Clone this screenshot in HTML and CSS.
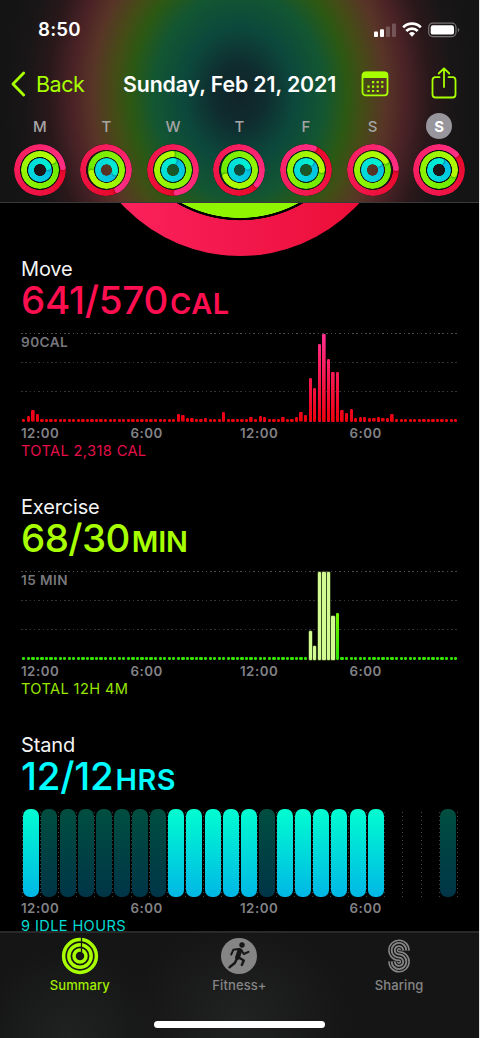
FILE: index.html
```html
<!DOCTYPE html>
<html lang="en">
<head>
<meta charset="utf-8">
<title>Activity</title>
<link rel="stylesheet" href="styles.css">
</head>
<body>
<div class="phone">
  <header class="header">
    <div class="status">
      <span class="time">8:50</span>
      <svg class="status-icons" width="88" height="18" viewBox="0 0 88 18">
        <g fill="#fff"><rect x="1" y="10.5" width="4" height="5.5" rx="1"/><rect x="7" y="8.3" width="4" height="7.7" rx="1"/></g>
        <g fill="#fff" opacity=".22"><rect x="13" y="5.5" width="4" height="10.5" rx="1"/><rect x="19" y="2.5" width="4" height="13.5" rx="1"/></g>
        <g fill="none" stroke="#fff" stroke-width="2.7"><path d="M30.2 6.4a12.3 12.3 0 0 1 17.6 0"/><path d="M33.3 10a8 8 0 0 1 11.4 0"/></g>
        <path fill="#fff" d="M36 12.5a4.4 4.4 0 0 1 6 0L39 15.8z"/>
        <rect x="55.7" y="2.2" width="27.3" height="13.4" rx="4" fill="none" stroke="#fff" stroke-opacity=".4" stroke-width="1.2"/>
        <rect x="57.7" y="4.2" width="23.3" height="9.4" rx="2.2" fill="#fff"/>
        <path d="M84.8 6.8c2 .8 2 3.6 0 4.4z" fill="#fff" opacity=".4"/>
      </svg>
    </div>
    <nav class="nav">
      <svg width="15" height="26" viewBox="0 0 15 26"><path d="M12.7 2L2 13l10.7 11" fill="none" stroke="#a8ff00" stroke-width="2.8" stroke-linecap="round" stroke-linejoin="round"/></svg>
      <span class="back">Back</span>
      <h1 class="title">Sunday, Feb 21, 2021</h1>
      <svg class="calendar" width="28" height="26" viewBox="0 0 28 26">
        <rect x="1.5" y="1.4" width="25" height="23" rx="3.2" fill="none" stroke="#a8ff00" stroke-width="1.8"/>
        <path d="M1 7V4.500Q1 .7 4.500 .7h19Q27 .7 27 4.500V7z" fill="#a8ff00"/>
        <g stroke="#a8ff00" stroke-width="2.2" stroke-dasharray="2.2 2.4" fill="none"><path d="M11 11.200h12M6.400 15.600H23M6.400 20h12"/></g>
      </svg>
      <svg class="share" width="26" height="32" viewBox="0 0 26 32" fill="none" stroke="#a8ff00" stroke-width="1.8" stroke-linecap="round" stroke-linejoin="round"><path d="M8.500 10.200H4.500Q1.500 10.200 1.500 13.200V27.500Q1.500 30.500 4.500 30.500H21.500Q24.500 30.500 24.500 27.500V13.200Q24.500 10.200 21.500 10.200H17.500M13 20V1.500M7.700 6.500L13 1.300l5.300 5.200"/></svg>
    </nav>
    <div class="week" id="week"></div>
  </header>

  <main class="content">
    <div class="goal"><div class="goal-ring"></div></div>

    <section class="metric move">
      <h2>Move</h2>
      <p class="value">641/570<small>CAL</small></p>
      <div class="chart"><span class="scale">90CAL</span><div class="bars" id="move-bars"></div></div>
      <div class="hours"><span>12:00</span><span>6:00</span><span>12:00</span><span>6:00</span></div>
      <p class="total">TOTAL 2,318 CAL</p>
    </section>

    <section class="metric exercise">
      <h2>Exercise</h2>
      <p class="value">68/30<small>MIN</small></p>
      <div class="chart"><span class="scale">15 MIN</span><div class="bars" id="exercise-bars"></div></div>
      <div class="hours"><span>12:00</span><span>6:00</span><span>12:00</span><span>6:00</span></div>
      <p class="total">TOTAL 12H 4M</p>
    </section>

    <section class="metric stand">
      <h2>Stand</h2>
      <p class="value">12/12<small>HRS</small></p>
      <div class="stand-chart" id="stand-bars"></div>
      <div class="hours"><span>12:00</span><span>6:00</span><span>12:00</span><span>6:00</span></div>
      <p class="total">9 IDLE HOURS</p>
    </section>
  </main>

  <footer class="tabs">
    <div class="tab-row">
      <div class="tab active">
        <svg width="38" height="38" viewBox="0 0 38 38" fill="none" stroke="#a8ff00" stroke-width="3.5">
          <circle cx="19" cy="19" r="16.4"/><circle cx="19" cy="19" r="11.200"/><circle cx="19" cy="19" r="6"/>
          <path d="M20.500 .5V5M20.500 5.500V10M20.500 11V15" stroke="#161616" stroke-width="1.3"/>
        </svg>
        <span>Summary</span>
      </div>
      <div class="tab">
        <svg width="38" height="38" viewBox="0 0 38 38" fill="none" stroke="#161616" stroke-linecap="round" stroke-linejoin="round">
          <circle cx="19" cy="19" r="18" fill="#858585" stroke="none"/>
          <circle cx="22" cy="8" r="2.7" fill="#161616" stroke="none"/>
          <path d="M19.800 13.500L17.500 20.500" stroke-width="4.8"/>
          <path d="M18.500 12L13.300 12.800L11.200 17.500M21.300 13L23.800 17L28.500 14.800" stroke-width="2"/>
          <path d="M17 21.500L14.800 26L9.500 30.200M18.800 20.500L23.800 23.500L21.800 28" stroke-width="2.4"/>
        </svg>
        <span>Fitness+</span>
      </div>
      <div class="tab">
        <svg width="38" height="38" viewBox="0 0 38 38" fill="none">
          <path d="M24.700 13.500A5.750 5.750 0 1 0 19 19A5.750 5.750 0 1 1 13.300 24.500" stroke="#858585" stroke-width="10.2"/>
          <path d="M24.700 13.500A5.750 5.750 0 1 0 19 19A5.750 5.750 0 1 1 13.300 24.500" stroke="#161616" stroke-width="7.1"/>
          <path d="M24.700 13.500A5.750 5.750 0 1 0 19 19A5.750 5.750 0 1 1 13.300 24.500" stroke="#858585" stroke-width="5"/>
          <path d="M24.700 13.500A5.750 5.750 0 1 0 19 19A5.750 5.750 0 1 1 13.300 24.500" stroke="#161616" stroke-width="1.3"/>
        </svg>
        <span>Sharing</span>
      </div>
    </div>
    <div class="home"></div>
  </footer>
</div>
<script src="script.js"></script>
</body>
</html>
```
FILE: styles.css
```css
* { box-sizing: border-box; }
body { margin: 0; background: #e4e4e4; font-family: Inter, "Liberation Sans", sans-serif; }
h1, h2, p { margin: 0; white-space: nowrap; }
svg { display: block; flex: none; }

.phone { width: 479px; height: 1038px; background: #000; overflow: hidden; display: flex; flex-direction: column; }

/* Header */
.header {
  flex: none; height: 203px; border-bottom: 1px solid #3a3a3a;
  background: radial-gradient(ellipse 240px 290px at 239px 95px, #10242a 0, #0f2c2f 10.5%, #0c483c 23%, #135632 35.5%, #2c5913 45%, #454c16 52%, #583527 61%, #4c2326 69%, #2a181b 79%, #191617 89%, #141414 100%);
}
.status { height: 58px; padding: 1px 18px 0 38px; display: flex; justify-content: space-between; align-items: center; color: #fff; }
.time { font-size: 18.7px; font-weight: 600; letter-spacing: .2px; }
.nav { height: 52px; padding-left: 11px; display: flex; align-items: center; }
.back { margin-left: 10px; width: 87px; font-size: 21.5px; color: #a8ff00; letter-spacing: -.5px; }
.title { width: 213px; font-size: 21.3px; font-weight: 600; letter-spacing: -.1px; color: #fff; }
.calendar { margin-left: 24.5px; }
.share { margin: -2px 0 0 42.5px; }
.week { display: grid; grid-template-columns: repeat(7, 66.57px); padding-left: 6.5px; }
.day { display: flex; flex-direction: column; align-items: center; gap: 4px; padding-top: 3px; }
.letter { width: 26px; height: 27px; display: grid; place-items: center; font-size: 15px; font-weight: 500; color: #a5a4a5; border-radius: 50%; }
.letter.today { background: #98969c; color: #fff; font-weight: 700; height: 26px; margin-bottom: 1px; }

.rings { display: grid; place-items: center; width: 52px; height: 52px; border-radius: 50%; background: radial-gradient(circle, transparent 6px, rgba(0,8,12,.62) 6.5px); }
.ring { grid-area: 1 / 1; width: var(--d); height: var(--d); border-radius: 50%; background: conic-gradient(from var(--end), var(--from), var(--to)); -webkit-mask: radial-gradient(closest-side, transparent calc(100% - 6.3px), #000 calc(100% - 5.8px)); mask: radial-gradient(closest-side, transparent calc(100% - 6.3px), #000 calc(100% - 5.8px)); }
.ring-cap { height: 100%; transform: rotate(var(--end)); }
.ring-cap::before { content: ""; display: block; width: 6px; height: 6px; margin: auto; border-radius: 50%; background: var(--to); box-shadow: 1px 0 1.5px rgba(0,0,0,.3); }
.ring.red { --d: 52px; --from: #e80828; --to: #ff2d83; }
.ring.green { --d: 37.6px; --from: #68ea00; --to: #b6fc00; }
.ring.blue { --d: 23.6px; --from: #00bce6; --to: #00f0d2; }

/* Scrolling summary */
.content { height: 728px; overflow: hidden; padding-left: 21px; }
.goal { height: 53px; overflow: hidden; margin-left: -21px; }
.goal-ring {
  width: 322px; height: 322px; margin: -269px auto 0; border-radius: 50%;
  background: radial-gradient(circle, #90f500 122.6px, #000 123.2px, #000 125px, transparent 125.6px), linear-gradient(90deg, #ff2460, #f2184c 50%, #ea0b30);
}
.metric { height: 237.8px; }
.metric h2 { height: 27px; font-size: 20px; line-height: 26px; font-weight: 400; letter-spacing: -.15px; color: #f4f4f4; }
.value { height: 50.4px; font-size: 38.5px; line-height: 35px; font-weight: 450; letter-spacing: -.25px; }
.value small { font-size: 28.8px; font-weight: 600; letter-spacing: .6px; margin-left: 2px; }
.move .value { color: #ff0f50; }
.exercise .value { color: #a8ff00; letter-spacing: -.6px; }
.exercise .value small { letter-spacing: -.1px; }
.stand .value { color: #00fdff; }
.chart {
  width: 437px; height: 88.5px; display: grid;
  background:
    repeating-linear-gradient(90deg, #4c4c4c 0 1.5px, transparent 1.5px 4.3px) 0 0 / 100% 1px no-repeat,
    repeating-linear-gradient(90deg, #343434 0 1.5px, transparent 1.5px 4.3px) 0 29px / 100% 1px no-repeat,
    repeating-linear-gradient(90deg, #343434 0 1.5px, transparent 1.5px 4.3px) 0 58px / 100% 1px no-repeat;
}
.scale { grid-area: 1 / 1; font-size: 13.6px; line-height: 19px; font-weight: 600; color: #77777b; letter-spacing: .45px; }
.bars { grid-area: 1 / 1; display: grid; grid-template-columns: repeat(96, 4.55px); align-items: end; justify-items: center; padding-left: .5px; }
.bar { width: 3.3px; border-radius: 1.3px; background: linear-gradient(0deg, #ec000d, #ff3090) bottom / 100% 88px; }
.exercise .bar { background: #35e500; }
.exercise .bar.workout { background: #d2fb91; box-shadow: 0 0 0 .7px #435729; border-radius: 1px; }
.exercise .bar.brisk { background: linear-gradient(0deg, #2dde00, #74f500); }
.hours { display: grid; grid-template-columns: repeat(4, 109.5px); height: 20px; font-size: 13.3px; line-height: 23.5px; font-weight: 600; color: #828286; letter-spacing: .5px; }
.total { font-size: 14.6px; line-height: 20px; letter-spacing: .38px; margin-top: -1px; }
.move .total { color: #e50e49; }
.exercise .total { color: #98e600; }
.stand .total { color: #00dcd3; }
.stand-chart { width: 437px; height: 88.5px; padding-left: .8px; display: grid; grid-template-columns: repeat(24, 18.14px) 1px; }
.hour { padding-left: 1.5px; background: repeating-linear-gradient(0deg, #444 0 1.5px, transparent 1.5px 4px) 0 0 / 1px 100% no-repeat; }
.hour i { display: block; width: 16px; height: 88px; border-radius: 7px; }
.hour .on { background: linear-gradient(#00fdd0, #00b7e6); }
.hour .idle { background: linear-gradient(#004e40, #003547); }

/* Tab bar */
.tabs {
  flex: none; height: 107px; border-top: 2px solid #292929;
  background: radial-gradient(ellipse 90px 90px at 70px 105px, #202222, transparent), radial-gradient(ellipse 110px 95px at 240px 85px, #212222, transparent), #151515;
}
.tab-row { height: 88px; display: grid; grid-template-columns: repeat(3, 159.67px); padding-top: 4px; }
.tab { display: flex; flex-direction: column; align-items: center; font-size: 13px; font-weight: 500; line-height: 20px; letter-spacing: .1px; color: #858585; }
.tab.active { color: #a0ed00; }
.home { width: 171px; height: 6.5px; margin: 0 auto; border-radius: 4px; background: #fff; }
```
FILE: script.js
```js
// End angles (degrees clockwise from the top) of each day's three rings.
const days = [
  ["M", 83, 54, 70], ["T", 150, 258, 105], ["W", 171, 356, 5], ["T", 129, 244, 67],
  ["F", 20, 90, 33], ["S", 85, 55, 43], ["S", 47, 105, 13]
];
document.getElementById("week").innerHTML = days.map(([letter, ...ends], i) =>
  `<div class="day"><span class="letter${i === 6 ? " today" : ""}">${letter}</span><div class="rings">` +
  ["red", "green", "blue"].map((c, k) =>
    `<div class="ring ${c}" style="--end:${ends[k]}deg"><div class="ring-cap"></div></div>`).join("") +
  `</div></div>`).join("");

const withPeaks = peaks => Array.from({ length: 96 }, (_, i) => peaks[i] || 3);
const move = withPeaks({
  1: 6, 2: 11.5, 3: 8, 34: 8, 35: 6.5, 36: 4, 37: 4, 40: 4, 44: 10, 50: 5, 52: 6, 53: 4.5,
  57: 5, 60: 5, 61: 9.5, 62: 7, 63: 43.5, 64: 34, 65: 77.5, 66: 88, 67: 62.5, 68: 50, 69: 50,
  70: 12, 71: 9, 72: 13, 73: 4, 74: 5, 75: 4.5, 76: 4, 77: 3.5, 78: 4.5, 79: 3.5, 80: 3.5, 81: 8
});
const exercise = withPeaks({ 63: 29, 64: 14, 65: 88, 66: 88, 67: 88, 68: 44, 69: 47 });
const draw = (id, values, kind) => {
  document.getElementById(id).innerHTML = values.map((h, i) =>
    `<span class="bar ${kind(i)}" style="height:${h}px"></span>`).join("");
};
draw("move-bars", move, () => "");
draw("exercise-bars", exercise, i => i >= 63 && i <= 68 ? "workout" : i === 69 ? "brisk" : "");

// 1 = stood, 0 = idle, - = no data, | = closing grid line
const pills = { 1: '<i class="on"></i>', 0: '<i class="idle"></i>' };
document.getElementById("stand-bars").innerHTML = [..."10000000111110111111---0|"]
  .map(c => `<div class="hour">${pills[c] || ""}</div>`).join("");
```
